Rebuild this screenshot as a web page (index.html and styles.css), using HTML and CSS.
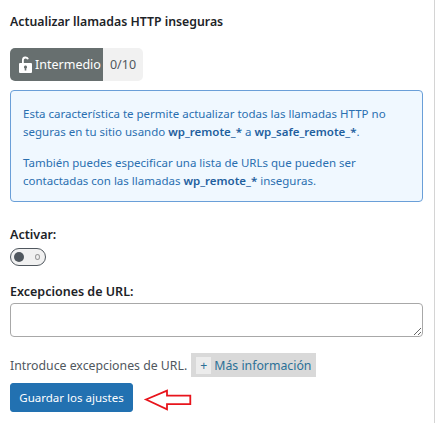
FILE: index.html
```html
<!DOCTYPE html>
<html lang="en">
<head>
    <meta charset="UTF-8">
    <meta name="viewport" content="width=device-width, initial-scale=1.0">
    <title>Actualizar llamadas HTTP inseguras</title>
    <link rel="stylesheet" href="styles.css">
</head>
<body>
    <div class="panel">
        <h2 class="title">Actualizar llamadas HTTP inseguras</h2>

        <div class="level">
            <span class="level-name">
                <svg class="lock" xmlns="http://www.w3.org/2000/svg" viewBox="0 0 13 17" fill="white">
                    <path d="M3 7V4a3.5 3.5 0 0 1 6.9-.9l-1.8.5A1.7 1.7 0 0 0 4.8 4v3z"/>
                    <path d="M1 7h11a1 1 0 0 1 1 1v8a1 1 0 0 1-1 1H1a1 1 0 0 1-1-1V8a1 1 0 0 1 1-1zm5.5 2.6a1.5 1.5 0 0 0-.8 2.8v2h1.6v-2a1.5 1.5 0 0 0-.8-2.8z" fill-rule="evenodd"/>
                </svg>
                Intermedio
            </span>
            <span class="level-score">0/10</span>
        </div>

        <div class="info">
            <p>Esta característica te permite actualizar todas las llamadas HTTP no seguras en tu sitio usando <b>wp_remote_*</b> a <b>wp_safe_remote_*</b>.</p>
            <p>También puedes especificar una lista de URLs que pueden ser contactadas con las llamadas <b>wp_remote_*</b> inseguras.</p>
        </div>

        <label class="label label-first">Activar:</label>
        <div class="toggle">
            <span class="toggle-knob"></span>
            <span class="toggle-off"></span>
        </div>

        <label class="label label-url">Excepciones de URL:</label>
        <textarea class="field"></textarea>

        <div class="help">
            Introduce excepciones de URL.
            <span class="more"><span class="more-plus">+</span> Más información</span>
        </div>

        <div class="actions">
            <button class="save">Guardar los ajustes</button>
            <svg class="arrow" xmlns="http://www.w3.org/2000/svg" viewBox="0 0 48 22">
                <path d="M2 10.5L23 1.7v5h23.3v8.4H23v5.2z" fill="white" stroke="#e8141c" stroke-width="1.8"/>
            </svg>
        </div>
    </div>
</body>
</html>
```

FILE: styles.css
```css
body {
    margin: 0;
    font-family: "Noto Sans", Arial, sans-serif;
    background-color: #fff;
    color: #23282d;
}

.panel {
    height: 423px;
    box-sizing: border-box;
    padding: 11px 11px 0 10px;
    border-right: 1px solid #d4d4d4;
    overflow: hidden;
}

.title {
    margin: 0;
    font-size: 12.3px;
    line-height: 22px;
    font-weight: 600;
    color: #1d2327;
}

.level {
    display: flex;
    margin-top: 15px;
    height: 33px;
}

.level-name {
    display: flex;
    align-items: center;
    gap: 3px;
    width: 93px;
    padding-left: 9px;
    box-sizing: border-box;
    background-color: #676f6f;
    color: #fff;
    font-size: 12.5px;
    border-radius: 5px 0 0 5px;
}

.lock {
    width: 13px;
    height: 17px;
}

.level-score {
    display: flex;
    align-items: center;
    justify-content: center;
    width: 40px;
    background-color: #f1f1f1;
    color: #50575e;
    font-size: 12.5px;
    border-radius: 0 5px 5px 0;
}

.info {
    margin-top: 9px;
    height: 112px;
    box-sizing: border-box;
    padding: 14px 12px 0;
    background-color: #f0f8ff;
    border: 1.5px solid #6a9fd8;
    border-radius: 4px;
    color: #2a6fb0;
    font-size: 11.5px;
    line-height: 18px;
}

.info p {
    margin: 0 0 13px;
}

.info b {
    font-weight: 600;
    color: #1f5f9e;
}

.label {
    display: block;
    font-size: 12.5px;
    line-height: 20px;
    font-weight: 600;
    color: #1d2327;
}

.label-first {
    margin-top: 23px;
}

.label-url {
    margin-top: 16px;
}

.toggle {
    position: relative;
    width: 36px;
    height: 18px;
    margin-top: 3px;
    box-sizing: border-box;
    background-color: #f1f1f1;
    border: 1.5px solid #50575e;
    border-radius: 9px;
}

.toggle-knob {
    position: absolute;
    left: 3px;
    top: 2.5px;
    width: 10px;
    height: 10px;
    background-color: #50575e;
    border-radius: 50%;
}

.toggle-off {
    position: absolute;
    right: 5px;
    top: 4.5px;
    width: 5px;
    height: 6px;
    box-sizing: border-box;
    border: 1px solid #999;
    border-radius: 50%;
}

.field {
    display: block;
    width: 100%;
    height: 34px;
    margin-top: 1px;
    box-sizing: border-box;
    background-color: #fff;
    border: 1px solid #a8a8a8;
    border-radius: 4px;
}

.help {
    display: flex;
    align-items: center;
    gap: 4px;
    margin-top: 16px;
    height: 24px;
    font-size: 12.3px;
    color: #50575e;
}

.more {
    display: flex;
    align-items: center;
    height: 24px;
    padding-right: 5px;
    background-color: #d9d9d9;
    color: #2b7097;
    gap: 3px;
}

.more-plus {
    display: flex;
    align-items: center;
    justify-content: center;
    width: 15px;
    height: 17px;
    margin-left: 5px;
    background-color: #ececec;
}

.actions {
    display: flex;
    align-items: center;
    margin-top: 6px;
}

.save {
    width: 123px;
    height: 29px;
    padding: 0;
    background-color: #2271b1;
    color: #fff;
    border: 1px solid #2271b1;
    border-radius: 3px;
    font-family: inherit;
    font-size: 11.5px;
}

.arrow {
    width: 48px;
    height: 22px;
    margin: 5px 0 0 11px;
}
```
